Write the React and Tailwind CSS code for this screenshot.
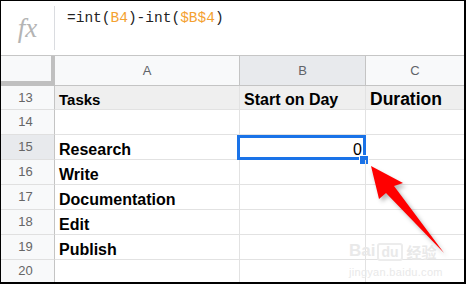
import React from "react";

const rows = [
  { n: 13, a: "Tasks", b: "Start on Day", c: "Duration", h: "h-[24px]", head: true },
  { n: 14, h: "h-[25px]" },
  { n: 15, a: "Research", b: "0", h: "h-[25px]", sel: true },
  { n: 16, a: "Write", h: "h-[25px]" },
  { n: 17, a: "Documentation", h: "h-[25px]" },
  { n: 18, a: "Edit", h: "h-[25px]" },
  { n: 19, a: "Publish", h: "h-[25px]" },
  { n: 20, h: "h-[22px]", last: true },
];

export default function App() {
  return (
    <div className="relative w-[466px] h-[284px] bg-white border-l border-t border-r-2 border-b-2 border-black overflow-hidden font-['Liberation_Sans',Arial,sans-serif]">
      {/* Formula bar */}
      <div className="flex h-[55px] border-b border-[#c6c6c6]">
        <div className="w-[53px] flex items-center justify-center pt-[1px]">
          <span className="font-['Liberation_Serif',serif] italic text-[27px] text-[#b4b4b4] leading-none">fx</span>
        </div>
        <div className="w-px my-[5px] bg-[#dadce0]"></div>
        <div className="pl-[12px] pt-[7px] font-['Liberation_Mono',monospace] text-[14.5px] leading-[20px] text-[#222]">
          =int(<span className="text-[#f4a12f]">B4</span>)-int(<span className="text-[#f4a12f]">$B$4</span>)
        </div>
      </div>

      {/* Column headers */}
      <div className="grid grid-cols-[54px_185px_126px_98px] h-[30px] text-[13px] text-[#5f6368]">
        <div className="bg-[#f8f9fa] border-r-[4px] border-b-[5px] border-[#c0c0c0]"></div>
        <div className="bg-[#f8f9fa] border-r border-b border-[#c4c4c4] flex items-center justify-center">A</div>
        <div className="bg-[#e8eaed] border-r border-b border-[#c4c4c4] flex items-center justify-center">B</div>
        <div className="bg-[#f8f9fa] border-b border-[#c4c4c4] flex items-center justify-center">C</div>
      </div>

      {/* Data rows */}
      {rows.map((r) => (
        <div key={r.n} className={`grid grid-cols-[54px_185px_126px_98px] ${r.h}`}>
          <div
            className={`${r.sel ? "bg-[#e8eaed]" : "bg-[#f8f9fa]"} ${r.last ? "" : "border-b"} border-r border-b-[#e0e0e0] border-r-[#c4c4c4] flex items-center justify-center pr-[4px] text-[13px] text-[#666]`}
          >
            {r.n}
          </div>
          <div
            className={`${r.head ? "bg-[#efefef]" : ""} ${r.last ? "" : "border-b"} border-r border-[#e2e2e2] flex items-end pl-[4px] font-bold text-black ${r.head ? "text-[15px]" : "text-[16px]"} leading-[18px]`}
          >
            {r.a}
          </div>
          <div
            className={`relative ${r.head ? "bg-[#efefef]" : ""} ${r.last ? "" : "border-b"} border-r border-[#e2e2e2] flex items-end text-[16px] leading-[18px] text-black ${r.sel ? "justify-end pr-[3px]" : "pl-[4px] font-bold"}`}
          >
            {r.b}
            {r.sel && (
              <>
                <div className="absolute left-[-3px] top-0 w-[129px] h-[25px] border-[3px] border-[#1a73e8]"></div>
                <div className="absolute left-[119px] top-[20px] w-[10px] h-[10px] bg-[#1a73e8] border border-white"></div>
              </>
            )}
          </div>
          <div
            className={`${r.head ? "bg-[#efefef]" : ""} ${r.last ? "" : "border-b"} border-[#e2e2e2] flex items-end pl-[4px] font-bold text-black text-[17.5px] leading-[19px]`}
          >
            {r.c}
          </div>
        </div>
      ))}

      {/* Watermark */}
      <div className="absolute left-[348px] top-[240px] flex flex-col items-start text-[#e9e9e9] pointer-events-none">
        <div className="flex items-end font-bold text-[17px] leading-[20px]">
          <span>Bai</span>
          <span className="ml-[2px] px-[2px] border-2 border-[#ececec] rounded-[3px] text-[14px] leading-[14px]">du</span>
          <span className="ml-[4px] font-['Noto_Sans_CJK_SC',sans-serif] text-[15px] leading-[18px]">经验</span>
        </div>
        <div className="text-[11px] leading-[12px] mt-[5px] tracking-[0.3px]">jingyan.baidu.com</div>
      </div>

      {/* Red arrow */}
      <svg className="absolute left-0 top-0 pointer-events-none" width="466" height="284" viewBox="0 0 466 284">
        <defs>
          <filter id="sh" x="-20%" y="-20%" width="140%" height="140%">
            <feGaussianBlur stdDeviation="2" />
          </filter>
        </defs>
        <polygon
          points="371,168 405,186 396,188 446,256 388,195 381,201"
          fill="rgba(0,0,0,0.28)"
          filter="url(#sh)"
        />
        <polygon points="370,165 402,182 393,185 443,252 385,192 378,198" fill="#ff0000" />
      </svg>
    </div>
  );
}
